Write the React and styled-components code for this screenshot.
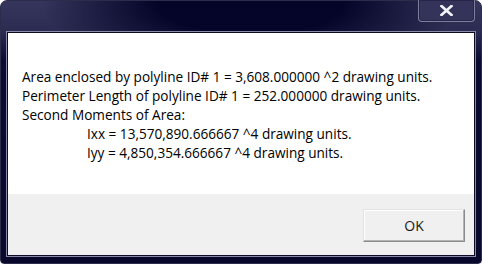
import { createGlobalStyle, styled } from 'styled-components';

const GlobalStyle = createGlobalStyle`
  html, body {
    margin: 0;
    padding: 0;
    background: #fff;
  }
`;

const lines = [
  { text: 'Area enclosed by polyline ID# 1 = 3,608.000000 ^2 drawing units.' },
  { text: 'Perimeter Length of polyline ID# 1 = 252.000000 drawing units.' },
  { text: 'Second Moments of Area:' },
  { text: 'Ixx = 13,570,890.666667 ^4 drawing units.', indent: true },
  { text: 'Iyy = 4,850,354.666667 ^4 drawing units.', indent: true },
];

function App() {
  return (
    <>
      <GlobalStyle />
      <Frame>
        <TitleBar>
          <CloseButton aria-label="Close">
            <svg width="13" height="11" viewBox="0 0 13 11">
              <path d="M1.5 1 L11.5 10 M11.5 1 L1.5 10" stroke="#f4f4f8" strokeWidth="2.6" strokeLinecap="square" />
            </svg>
          </CloseButton>
        </TitleBar>
        <Client>
          <Message>
            {lines.map((l) => (
              <Line key={l.text} $indent={l.indent}>
                {l.text}
              </Line>
            ))}
          </Message>
          <Footer>
            <Button>OK</Button>
          </Footer>
        </Client>
      </Frame>
    </>
  );
}

const Frame = styled.div`
  width: 482px;
  height: 264px;
  box-sizing: border-box;
  padding: 0 6px 7px 6px;
  display: flex;
  flex-direction: column;
  border-radius: 7px 7px 4px 4px;
  border: 1px solid #2c2c4c;
  background:
    radial-gradient(ellipse 210px 75px at 52% 0, #05052a 45%, rgba(5, 5, 42, 0) 100%),
    linear-gradient(to bottom, #36365c 0, #2c2c52 30px, #0b0b32 60px, #08082c 100%);
`;

const TitleBar = styled.div`
  height: 31px;
  display: flex;
  justify-content: flex-end;
  align-items: flex-start;
`;

const CloseButton = styled.div`
  width: 55px;
  height: 21px;
  margin-top: -1px;
  display: flex;
  align-items: center;
  justify-content: center;
  border: 1px solid #7e7e9c;
  border-top: none;
  border-radius: 0 0 4px 4px;
  background: #34345b;
  box-shadow: inset 0 0 0 1px #26264a;
`;

const Client = styled.div`
  flex: 1;
  display: flex;
  flex-direction: column;
  border: 1px solid #0a0a24;
  box-shadow: 0 0 0 1px #8a8aa8;
  background: #fff;
  font-family: 'Open Sans', 'Noto Sans', sans-serif;
  font-size: 13.6px;
  color: #000;
`;

const Message = styled.div`
  height: 161px;
  box-sizing: border-box;
  padding: 34px 0 0 14px;
  background: #fff;
`;

const Line = styled.div`
  line-height: 19px;
  white-space: nowrap;
  padding-left: ${(p) => (p.$indent ? '65px' : '0')};
`;

const Footer = styled.div`
  flex: 1;
  background: #f0f0f0;
  display: flex;
  justify-content: flex-end;
  align-items: flex-start;
  padding: 15px 9px 0 0;
`;

const Button = styled.div`
  width: 100px;
  height: 31px;
  display: flex;
  align-items: center;
  justify-content: center;
  border: 1px solid;
  border-color: #e2e2e2 #8c8c8c #8c8c8c #e2e2e2;
  box-shadow: inset -1px -1px 0 #b4b4b4, inset 1px 1px 0 #fff;
  background: #f0f0f0;
  font-size: 14px;
  color: #1a1a1a;
`;

export default App;
